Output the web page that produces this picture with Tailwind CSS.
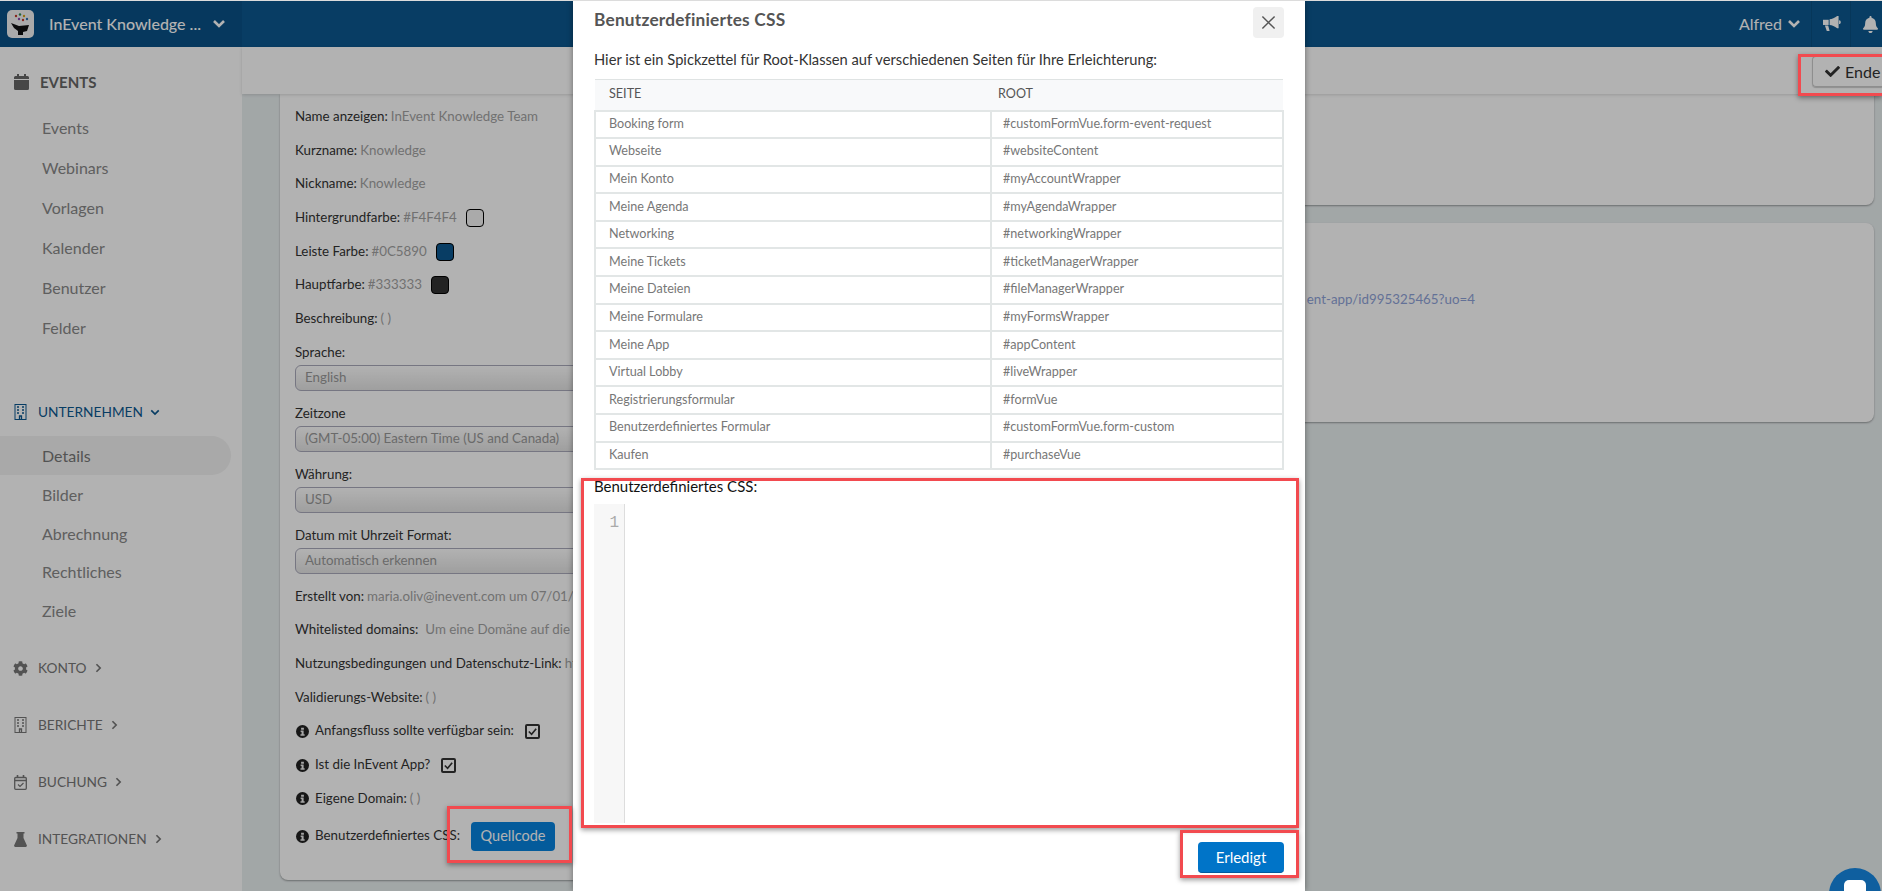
<!DOCTYPE html>
<html lang="de">
<head>
  <meta charset="UTF-8">
  <title>Benutzerdefiniertes CSS</title>
  <script src="https://cdn.jsdelivr.net/npm/@tailwindcss/browser@4"></script>
</head>
<body class="font-[Lato,sans-serif] text-[#333] overflow-hidden">
  <div class="relative w-[1882px] h-[891px] overflow-hidden bg-[#e9eff0] border-t border-[#dcdcdc]">

    <!-- Top bar -->
    <header class="flex h-[46px] bg-[#0c5890] text-white">
      <div class="flex items-center w-[242px] h-full pl-[7px] bg-[#0a5187]">
        <div class="w-[27px] h-[28px] rounded-[5px] bg-[#f4f4f4] flex items-center justify-center shrink-0">
          <svg viewBox="0 0 27 28" class="w-[27px] h-[28px]">
            <circle cx="9" cy="6" r="1.2" fill="#c0392b"/><circle cx="13" cy="4.5" r="1.2" fill="#2e8b57"/><circle cx="17" cy="6" r="1.2" fill="#d4a017"/><circle cx="20" cy="9" r="1.2" fill="#2e6fb0"/><circle cx="12" cy="9" r="1.2" fill="#8e44ad"/><circle cx="16" cy="10" r="1.2" fill="#c0392b"/>
            <path d="M4 13l8 3 10-1-2 6-4 1v3h-5v-4l-4-3z" fill="#111"/>
          </svg>
        </div>
        <span class="ml-[15px] text-[16px] font-medium whitespace-nowrap">InEvent Knowledge ...</span>
        <svg viewBox="0 0 14 10" class="w-[14px] h-[10px] ml-[11px]"><polyline points="2,2 7,7 12,2" fill="none" stroke="currentColor" stroke-width="2.6"/></svg>
      </div>
      <div class="flex-1 flex items-center justify-end">
        <span class="text-[16px]">Alfred</span>
        <svg viewBox="0 0 14 10" class="w-[14px] h-[10px] ml-[5px] mr-[10px]"><polyline points="2,2 7,7 12,2" fill="none" stroke="currentColor" stroke-width="2.6"/></svg>
        <div class="h-full w-[39px] flex items-center justify-center border-l border-black/10">
          <svg viewBox="0 0 20 18" class="w-[19px] h-[17px]" fill="currentColor"><path d="M16 0h1.500v13H16c-2.500-2.200-5.500-3.300-8-3.500V3.500C10.500 3.300 13.500 2.200 16 0z"/><path d="M1 4h6v5.500H1z"/><path d="M3 10h3.500l1.500 6H5zM18 4.500c1.300 0 1.800 1 1.800 2s-.5 2-1.800 2z"/></svg>
        </div>
        <div class="h-full w-[32px] flex items-center pl-[12px] border-l border-black/10">
          <svg viewBox="0 0 448 512" class="w-[15px] h-[17px] shrink-0" fill="currentColor"><path d="M224 512c35.32 0 63.97-28.65 63.97-64H160.03c0 35.35 28.65 64 63.97 64zm215.39-149.71c-19.32-20.76-55.47-51.99-55.47-154.29 0-77.7-54.48-139.9-127.94-155.16V32c0-17.67-14.32-32-31.98-32s-31.98 14.33-31.98 32v20.84C118.56 68.1 64.08 130.3 64.08 208c0 102.3-36.15 133.53-55.47 154.29-6 6.45-8.66 14.16-8.61 21.71.11 16.4 12.98 32 32.1 32h383.8c19.12 0 32-15.6 32.1-32 .05-7.55-2.61-15.27-8.61-21.71z"/></svg>
        </div>
      </div>
    </header>

    <div class="flex h-[844px]">
      <!-- Sidebar -->
      <aside class="w-[242px] h-full shrink-0 bg-white text-[#888] pt-[15px]">
        <div class="flex items-center h-[40px] pl-[14px] text-[#666] font-bold text-[15px]">
          <svg viewBox="0 0 15 16" class="w-[15px] h-[16px] mr-[11px]" fill="currentColor"><path d="M0 6h15v8.500A1.500 1.500 0 0 1 13.500 16h-12A1.500 1.500 0 0 1 0 14.500zM1.500 2H3V0h2v2h5V0h2v2h1.500A1.500 1.500 0 0 1 15 3.500V5H0V3.500A1.500 1.500 0 0 1 1.500 2z"/></svg>
          EVENTS
        </div>
        <nav class="text-[16px] mt-[6px]">
          <div class="h-[40px] flex items-center pl-[42px]">Events</div>
          <div class="h-[40px] flex items-center pl-[42px]">Webinars</div>
          <div class="h-[40px] flex items-center pl-[42px]">Vorlagen</div>
          <div class="h-[40px] flex items-center pl-[42px]">Kalender</div>
          <div class="h-[40px] flex items-center pl-[42px]">Benutzer</div>
          <div class="h-[40px] flex items-center pl-[42px]">Felder</div>
        </nav>
        <div class="flex items-center h-[40px] mt-[44px] pl-[14px] text-[#0c5890] text-[13.7px]">
          <svg viewBox="0 0 13 16" class="w-[13px] h-[16px] mr-[11px]" fill="none" stroke="currentColor"><rect x="1" y=".5" width="11" height="15"/><path d="M3 3h2M8 3h2M3 6h2M8 6h2M3 9h2M8 9h2M5.500 15.500V12h2v3.500" stroke-width="1.300"/></svg>
          UNTERNEHMEN
          <svg viewBox="0 0 12 8" class="w-[10px] h-[7px] ml-[7px]"><polyline points="1.500,1.500 6,6 10.500,1.500" fill="none" stroke="currentColor" stroke-width="2"/></svg>
        </div>
        <nav class="text-[16px] mt-[4px]">
          <div class="h-[39px] w-[231px] flex items-center pl-[42px] bg-[#f2f2f2] rounded-r-[20px] text-[#777]">Details</div>
          <div class="h-[39px] flex items-center pl-[42px]">Bilder</div>
          <div class="h-[39px] flex items-center pl-[42px]">Abrechnung</div>
          <div class="h-[38px] flex items-center pl-[42px]">Rechtliches</div>
          <div class="h-[39px] flex items-center pl-[42px]">Ziele</div>
        </nav>
        <div class="mt-[18px] flex flex-col gap-[17px] text-[13.7px] text-[#777]">
          <div class="flex items-center h-[40px] pl-[13px]">
            <svg viewBox="0 0 512 512" class="w-[15px] h-[15px] mr-[10px]" fill="currentColor"><path d="M487.4 315.7l-42.6-24.6c4.3-23.2 4.3-47 0-70.2l42.6-24.6c4.9-2.8 7.1-8.6 5.5-14-11.1-35.6-30-67.8-54.7-94.6-3.8-4.1-10-5.1-14.8-2.3L380.8 110c-17.9-15.4-38.5-27.3-60.8-35.1V25.8c0-5.6-3.9-10.5-9.4-11.7-36.7-8.2-74.3-7.8-109.2 0-5.5 1.2-9.4 6.1-9.4 11.7V75c-22.2 7.9-42.8 19.8-60.8 35.1L88.7 85.5c-4.9-2.8-11-1.9-14.8 2.3-24.7 26.7-43.6 58.9-54.7 94.6-1.7 5.4.6 11.2 5.5 14L67.3 221c-4.3 23.2-4.3 47 0 70.2l-42.6 24.6c-4.9 2.8-7.1 8.6-5.5 14 11.1 35.6 30 67.8 54.7 94.6 3.8 4.1 10 5.1 14.8 2.3l42.6-24.6c17.9 15.4 38.5 27.3 60.8 35.1v49.2c0 5.6 3.9 10.5 9.4 11.7 36.7 8.2 74.3 7.800 109.2 0 5.500-1.200 9.400-6.100 9.400-11.700v-49.200c22.200-7.900 42.800-19.800 60.800-35.100l42.600 24.600c4.900 2.800 11 1.900 14.800-2.300 24.700-26.700 43.600-58.900 54.700-94.600 1.500-5.500-.7-11.300-5.600-14.100zM256 336c-44.100 0-80-35.900-80-80s35.900-80 80-80 80 35.900 80 80-35.900 80-80 80z"/></svg>
            KONTO
            <svg viewBox="0 0 8 12" class="w-[7px] h-[10px] ml-[8px]"><polyline points="1.500,1.500 6,6 1.500,10.500" fill="none" stroke="currentColor" stroke-width="2"/></svg>
          </div>
          <div class="flex items-center h-[40px] pl-[14px]">
            <svg viewBox="0 0 13 16" class="w-[13px] h-[16px] mr-[11px]" fill="none" stroke="currentColor"><rect x="1" y=".5" width="11" height="15"/><path d="M3 3h2M8 3h2M3 6h2M8 6h2M3 9h2M8 9h2M5.500 15.500V12h2v3.500" stroke-width="1.300"/></svg>
            BERICHTE
            <svg viewBox="0 0 8 12" class="w-[7px] h-[10px] ml-[8px]"><polyline points="1.500,1.500 6,6 1.500,10.500" fill="none" stroke="currentColor" stroke-width="2"/></svg>
          </div>
          <div class="flex items-center h-[40px] pl-[14px]">
            <svg viewBox="0 0 13 15" class="w-[13px] h-[15px] mr-[11px]" fill="none" stroke="currentColor"><rect x=".7" y="2.500" width="11.600" height="11.800" rx="1" stroke-width="1.300"/><path d="M.7 5.500h11.600M3.500 0v3M9.500 0v3" stroke-width="1.600"/><path d="M4 9.500l2 2 3.500-3.500" stroke-width="1.200"/></svg>
            BUCHUNG
            <svg viewBox="0 0 8 12" class="w-[7px] h-[10px] ml-[8px]"><polyline points="1.500,1.500 6,6 1.500,10.500" fill="none" stroke="currentColor" stroke-width="2"/></svg>
          </div>
          <div class="flex items-center h-[40px] pl-[14px]">
            <svg viewBox="0 0 13 15" class="w-[13px] h-[15px] mr-[11px]" fill="currentColor"><path d="M2.500 0h8v1.500H9.500v4.500l3.200 7a1.300 1.300 0 0 1-1.200 2h-10a1.300 1.300 0 0 1-1.200-2l3.200-7V1.500H2.500z"/></svg>
            INTEGRATIONEN
            <svg viewBox="0 0 8 12" class="w-[7px] h-[10px] ml-[8px]"><polyline points="1.500,1.500 6,6 1.500,10.500" fill="none" stroke="currentColor" stroke-width="2"/></svg>
          </div>
        </div>
      </aside>

      <!-- Main column -->
      <main class="flex-1 min-w-0">
        <div class="relative z-10 flex justify-end h-[47px] bg-white shadow-[0_1px_3px_rgba(0,0,0,0.15)] pt-[9px]">
          <div class="w-[70px] h-[31px] border border-r-0 border-[#ccc] rounded-l-[4px] flex items-center pl-[12px] text-[16px] whitespace-nowrap overflow-hidden shadow-[0_1px_1px_rgba(0,0,0,0.2)]">
            <svg viewBox="0 0 512 512" class="w-[15px] h-[15px] mr-[5px] shrink-0" fill="currentColor"><path d="M173.898 439.404l-166.4-166.4c-9.997-9.997-9.997-26.206 0-36.204l36.203-36.204c9.997-9.998 26.207-9.998 36.204 0L192 312.69 432.095 72.596c9.997-9.997 26.207-9.997 36.204 0l36.203 36.204c9.997 9.997 9.997 26.206 0 36.204l-294.4 294.401c-9.998 9.997-26.207 9.997-36.204-.001z"/></svg>
            Ende
          </div>
        </div>

        <div class="flex pl-[38px] pr-[8px] gap-[20px]">
          <!-- Details card -->
          <section class="w-[800px] h-[786px] shrink-0 bg-white rounded-b-[8px] shadow-[0_1px_2px_rgba(0,0,0,0.35)] pl-[15px] pt-[6px] text-[13.33px]">
            <div class="h-[33.7px] flex items-center whitespace-nowrap">Name anzeigen:<span class="ml-[3px] text-[#a3a3a3]">InEvent Knowledge Team</span></div>
            <div class="h-[33.7px] flex items-center">Kurzname:<span class="ml-[3px] text-[#a3a3a3]">Knowledge</span></div>
            <div class="h-[33.7px] flex items-center">Nickname:<span class="ml-[3px] text-[#a3a3a3]">Knowledge</span></div>
            <div class="h-[33.7px] flex items-center">Hintergrundfarbe:<span class="ml-[3px] text-[#a3a3a3]">#F4F4F4</span><span class="ml-[9px] w-[18px] h-[18px] rounded-[4px] border border-black bg-[#f4f4f4]"></span></div>
            <div class="h-[33.7px] flex items-center">Leiste Farbe:<span class="ml-[3px] text-[#a3a3a3]">#0C5890</span><span class="ml-[9px] w-[18px] h-[18px] rounded-[4px] border border-black bg-[#0c5890]"></span></div>
            <div class="h-[33.7px] flex items-center">Hauptfarbe:<span class="ml-[3px] text-[#a3a3a3]">#333333</span><span class="ml-[9px] w-[18px] h-[18px] rounded-[4px] border border-black bg-[#333333]"></span></div>
            <div class="h-[33.7px] flex items-center">Beschreibung:<span class="ml-[3px] text-[#a3a3a3]">( )</span></div>

            <div class="mt-[6px] flex flex-col gap-[12px] w-[760px]">
              <label class="block">
                <span class="block h-[21px] leading-[21px]">Sprache:</span>
                <div class="mt-[2px] h-[26px] border border-[#aab] rounded-[6px] bg-gradient-to-b from-white to-[#e4e4e4] pl-[9px] flex items-center text-[#999]">English</div>
              </label>
              <label class="block">
                <span class="block h-[21px] leading-[21px]">Zeitzone</span>
                <div class="mt-[2px] h-[26px] border border-[#aab] rounded-[6px] bg-gradient-to-b from-white to-[#e4e4e4] pl-[9px] flex items-center text-[#999]">(GMT-05:00) Eastern Time (US and Canada)</div>
              </label>
              <label class="block">
                <span class="block h-[21px] leading-[21px]">Währung:</span>
                <div class="mt-[2px] h-[26px] border border-[#aab] rounded-[6px] bg-gradient-to-b from-white to-[#e4e4e4] pl-[9px] flex items-center text-[#999]">USD</div>
              </label>
              <label class="block">
                <span class="block h-[21px] leading-[21px]">Datum mit Uhrzeit Format:</span>
                <div class="mt-[2px] h-[26px] border border-[#aab] rounded-[6px] bg-gradient-to-b from-white to-[#e4e4e4] pl-[9px] flex items-center text-[#999]">Automatisch erkennen</div>
              </label>
            </div>

            <div class="mt-[6px]">
              <div class="h-[33.7px] flex items-center whitespace-nowrap">Erstellt von:<span class="ml-[3px] text-[#a3a3a3]">maria.oliv@inevent.com um 07/01/2019</span></div>
              <div class="h-[33.7px] flex items-center whitespace-nowrap">Whitelisted domains:<span class="ml-[7px] text-[#a3a3a3]">Um eine Domäne auf die Whitelist zu setzen</span></div>
              <div class="h-[33.7px] flex items-center whitespace-nowrap">Nutzungsbedingungen und Datenschutz-Link:<span class="ml-[3px] text-[#a3a3a3]">https://inevent.com</span></div>
              <div class="h-[33.7px] flex items-center">Validierungs-Website:<span class="ml-[3px] text-[#a3a3a3]">( )</span></div>
              <div class="h-[33.7px] flex items-center">
                <svg viewBox="0 0 14 14" class="w-[13px] h-[13px] ml-px mr-[6px]"><circle cx="7" cy="7" r="7" fill="#222"/><path d="M5.500 3h3v2h-3zM5 6h3.200v4H9.300v1.500H4.800V10H6V7.500H5z" fill="#eee"/></svg>
                Anfangsfluss sollte verfügbar sein:
                <span class="ml-[11px] w-[15px] h-[15px] border-2 border-[#333] rounded-[2px] flex items-center justify-center"><svg viewBox="0 0 12 12" class="w-[11px] h-[11px]"><polyline points="2,6 5,9 10,3" fill="none" stroke="#333" stroke-width="1.800"/></svg></span>
              </div>
              <div class="h-[33.7px] flex items-center">
                <svg viewBox="0 0 14 14" class="w-[13px] h-[13px] ml-px mr-[6px]"><circle cx="7" cy="7" r="7" fill="#222"/><path d="M5.500 3h3v2h-3zM5 6h3.200v4H9.300v1.500H4.800V10H6V7.500H5z" fill="#eee"/></svg>
                Ist die InEvent App?
                <span class="ml-[11px] w-[15px] h-[15px] border-2 border-[#333] rounded-[2px] flex items-center justify-center"><svg viewBox="0 0 12 12" class="w-[11px] h-[11px]"><polyline points="2,6 5,9 10,3" fill="none" stroke="#333" stroke-width="1.800"/></svg></span>
              </div>
              <div class="h-[33.7px] flex items-center">
                <svg viewBox="0 0 14 14" class="w-[13px] h-[13px] ml-px mr-[6px]"><circle cx="7" cy="7" r="7" fill="#222"/><path d="M5.500 3h3v2h-3zM5 6h3.200v4H9.300v1.500H4.800V10H6V7.500H5z" fill="#eee"/></svg>
                Eigene Domain:<span class="ml-[3px] text-[#a3a3a3]">( )</span>
              </div>
              <div class="mt-[6px] h-[29px] flex items-center">
                <svg viewBox="0 0 14 14" class="w-[13px] h-[13px] ml-px mr-[6px]"><circle cx="7" cy="7" r="7" fill="#222"/><path d="M5.500 3h3v2h-3zM5 6h3.200v4H9.300v1.500H4.800V10H6V7.500H5z" fill="#eee"/></svg>
                Benutzerdefiniertes CSS:
                <span class="ml-[11px] w-[84px] h-[29px] rounded-[4px] bg-[#0783df] text-white text-[14.5px] flex items-center justify-center">Quellcode</span>
              </div>
            </div>
          </section>

          <!-- Right cards -->
          <div class="flex-1 min-w-0 flex flex-col gap-[18px]">
            <section class="h-[111px] bg-white rounded-b-[8px] shadow-[0_1px_2px_rgba(0,0,0,0.35)]"></section>
            <section class="h-[199px] bg-white rounded-[8px] shadow-[0_1px_2px_rgba(0,0,0,0.35)] pt-[66px]">
              <div class="w-[375px] h-[20px] leading-[20px] text-[13.33px] text-right text-[#8fa3d8] whitespace-nowrap">ent-app/id995325465?uo=4</div>
            </section>
          </div>
        </div>
      </main>
    </div>

    <!-- Backdrop -->
    <div class="absolute inset-0 z-20 bg-black/30"></div>

    <!-- Modal -->
    <div class="absolute z-30 left-[573px] top-0 w-[732px] h-[890px] bg-white shadow-[0_0_6px_rgba(0,0,0,0.4)] px-[21px]">
      <div class="flex items-start justify-between h-[46px]">
        <h2 class="mt-[6px] text-[17.3px] font-bold text-[#555] tracking-[0.2px]">Benutzerdefiniertes CSS</h2>
        <button class="mt-[6px] w-[31px] h-[31px] rounded-[4px] bg-[#f0f0f0] flex items-center justify-center">
          <svg viewBox="0 0 16 16" class="w-[15px] h-[15px]"><path d="M1.500 1.500l13 13M14.500 1.500l-13 13" stroke="#555" stroke-width="1.500"/></svg>
        </button>
      </div>
      <p class="h-[33px] text-[14.7px] text-[#333] leading-[24px]">Hier ist ein Spickzettel für Root-Klassen auf verschiedenen Seiten für Ihre Erleichterung:</p>
      <table class="w-[690px] -mt-px border-collapse text-[12.6px] text-[#777] table-fixed">
        <thead>
          <tr class="h-[31px] bg-[#f8f9fa] border-t border-b-2 border-[#dfe3e3] text-[#555]">
            <th class="w-[396px] pl-[14px] text-left font-normal">SEITE</th>
            <th class="pl-[7px] text-left font-normal">ROOT</th>
          </tr>
        </thead>
        <tbody>
          <tr class="h-[27.6px]"><td class="border-2 border-[#e2e6e6] pl-[13px]">Booking form</td><td class="border-2 border-[#e2e6e6] pl-[11px]">#customFormVue.form-event-request</td></tr>
          <tr class="h-[27.6px]"><td class="border-2 border-[#e2e6e6] pl-[13px]">Webseite</td><td class="border-2 border-[#e2e6e6] pl-[11px]">#websiteContent</td></tr>
          <tr class="h-[27.6px]"><td class="border-2 border-[#e2e6e6] pl-[13px]">Mein Konto</td><td class="border-2 border-[#e2e6e6] pl-[11px]">#myAccountWrapper</td></tr>
          <tr class="h-[27.6px]"><td class="border-2 border-[#e2e6e6] pl-[13px]">Meine Agenda</td><td class="border-2 border-[#e2e6e6] pl-[11px]">#myAgendaWrapper</td></tr>
          <tr class="h-[27.6px]"><td class="border-2 border-[#e2e6e6] pl-[13px]">Networking</td><td class="border-2 border-[#e2e6e6] pl-[11px]">#networkingWrapper</td></tr>
          <tr class="h-[27.6px]"><td class="border-2 border-[#e2e6e6] pl-[13px]">Meine Tickets</td><td class="border-2 border-[#e2e6e6] pl-[11px]">#ticketManagerWrapper</td></tr>
          <tr class="h-[27.6px]"><td class="border-2 border-[#e2e6e6] pl-[13px]">Meine Dateien</td><td class="border-2 border-[#e2e6e6] pl-[11px]">#fileManagerWrapper</td></tr>
          <tr class="h-[27.6px]"><td class="border-2 border-[#e2e6e6] pl-[13px]">Meine Formulare</td><td class="border-2 border-[#e2e6e6] pl-[11px]">#myFormsWrapper</td></tr>
          <tr class="h-[27.6px]"><td class="border-2 border-[#e2e6e6] pl-[13px]">Meine App</td><td class="border-2 border-[#e2e6e6] pl-[11px]">#appContent</td></tr>
          <tr class="h-[27.6px]"><td class="border-2 border-[#e2e6e6] pl-[13px]">Virtual Lobby</td><td class="border-2 border-[#e2e6e6] pl-[11px]">#liveWrapper</td></tr>
          <tr class="h-[27.6px]"><td class="border-2 border-[#e2e6e6] pl-[13px]">Registrierungsformular</td><td class="border-2 border-[#e2e6e6] pl-[11px]">#formVue</td></tr>
          <tr class="h-[27.6px]"><td class="border-2 border-[#e2e6e6] pl-[13px]">Benutzerdefiniertes Formular</td><td class="border-2 border-[#e2e6e6] pl-[11px]">#customFormVue.form-custom</td></tr>
          <tr class="h-[27.6px]"><td class="border-2 border-[#e2e6e6] pl-[13px]">Kaufen</td><td class="border-2 border-[#e2e6e6] pl-[11px]">#purchaseVue</td></tr>
        </tbody>
      </table>
      <div class="mt-[4px] h-[24px] text-[15px] text-[#111] leading-[24px]">Benutzerdefiniertes CSS:</div>
      <div class="mt-[6px] h-[319px] flex">
        <div class="w-[31px] h-full bg-[#f7f7f7] border-r border-[#ddd] text-right pr-[5px] pt-[9px] text-[16px] leading-[20px] text-[#aaa] font-['Liberation_Mono',monospace]">1</div>
        <div class="flex-1"></div>
      </div>
      <div class="mt-[19px] flex justify-end">
        <button class="w-[86px] h-[31px] rounded-[4px] bg-[#0074c8] border-b border-[#005a9e] text-white text-[15px]">Erledigt</button>
      </div>
    </div>

    <!-- Red annotation boxes -->
    <div class="absolute z-40 left-[447px] top-[805px] w-[125px] h-[57px] border-[3px] border-[#f24a4f] shadow-[0_2px_5px_rgba(0,0,0,0.4)]"></div>
    <div class="absolute z-40 left-[581px] top-[477px] w-[718px] h-[350px] border-[3px] border-[#f24a4f] shadow-[0_2px_5px_rgba(0,0,0,0.4)]"></div>
    <div class="absolute z-40 left-[1180px] top-[829px] w-[119px] h-[48px] border-[3px] border-[#f24a4f] shadow-[0_2px_5px_rgba(0,0,0,0.4)]"></div>
    <div class="absolute z-40 left-[1798px] top-[53px] w-[84px] h-[42px] border-[3px] border-r-0 border-[#f24a4f] shadow-[0_2px_5px_rgba(0,0,0,0.4)]"></div>

    <!-- Chat bubble -->
    <div class="absolute z-40 left-[1829px] top-[867px] w-[52px] h-[52px] rounded-full bg-[#0f5f9f] flex justify-center pt-[12px]">
      <span class="w-[22px] h-[22px] rounded-[5px] bg-white"></span>
    </div>
  </div>
</body>
</html>
